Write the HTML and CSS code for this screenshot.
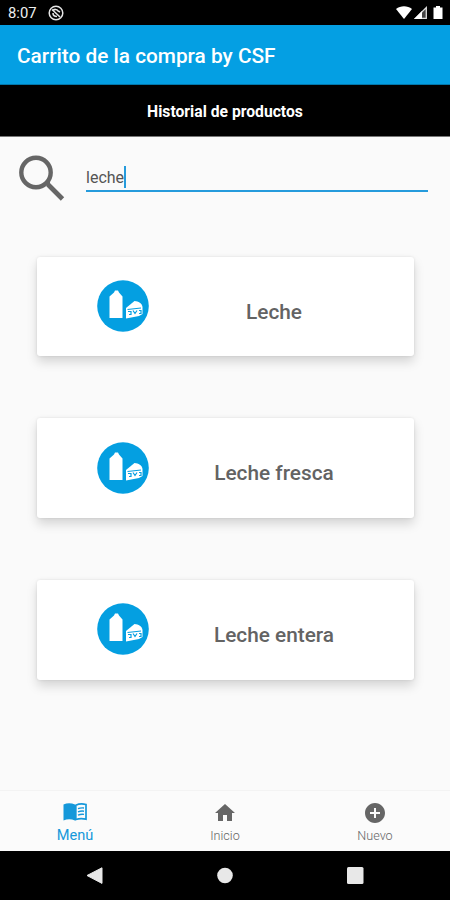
FILE: index.html
```
<!DOCTYPE html>
<html lang="es">
  <head>
    <meta charset="utf-8">
    <title>Carrito de la compra by CSF</title>
    <link rel="stylesheet" href="styles.css">
  </head>
  <body>
    <div class="status">
      <span class="clock">8:07</span>
      <svg class="status-app" width="16" height="16" viewBox="0 0 16 16">
        <circle cx="8" cy="8" r="6.8" fill="none" stroke="#e4e4e4" stroke-width="1.5"/>
        <path d="M4.500 6C6 3.800 9 4 10 6L12 7M4 4.500l8 7.500M5 8c0 2.500 1.500 3.500 4 3.500" fill="none" stroke="#e4e4e4" stroke-width="1.6"/>
      </svg>
      <svg class="status-icons" width="50" height="16" viewBox="0 0 50 16">
        <path d="M0 4C4.500 .3 11.500 .3 16 4L8 14Z" fill="#fff"/>
        <path d="M30.300 2.500v10.800H19.500Z" fill="#444" stroke="#ddd" stroke-width="1.3"/>
        <path d="M26 6v8h-8Z" fill="#fff"/>
        <path d="M40 1h4v1.500h2.500V14h-9V2.500H40Z" fill="#fff"/>
      </svg>
    </div>
    <header class="appbar">Carrito de la compra by CSF</header>
    <h1 class="heading">Historial de productos</h1>

    <main>
      <div class="search">
        <svg width="46" height="46" viewBox="0 0 46 46" fill="none" stroke="#666">
          <circle cx="17" cy="17.5" r="14.7" stroke-width="4.4"/>
          <path d="M27 28h4M29 29.500L43.500 44" stroke-width="4.8"/>
        </svg>
        <div class="field"><span class="query">leche</span></div>
      </div>

      <section class="products">
        <div class="card">
          <svg class="dairy" width="52" height="52" viewBox="0 0 52 52">
            <circle cx="26" cy="26" r="25.8" fill="#049fe1"/>
            <path d="M18 10.500h3l1 2 3.500 4V38h-13V16.500l4.500-4Z" fill="#fff"/>
            <path d="M29 28l8.500-7c4 .2 7.500 2.500 8 6v7L42 36l-13 2.500Z" fill="#fff"/>
            <path d="M30.500 29.500L44 28M31 31.500h3v3h-2M36 30.500l2 3 2-3M42 30.500h2v3h-2" fill="none" stroke="#049fe1" stroke-width="1.2"/>
          </svg>
          <span class="name">Leche</span>
        </div>
        <div class="card">
          <svg class="dairy" width="52" height="52" viewBox="0 0 52 52">
            <circle cx="26" cy="26" r="25.8" fill="#049fe1"/>
            <path d="M18 10.500h3l1 2 3.500 4V38h-13V16.500l4.500-4Z" fill="#fff"/>
            <path d="M29 28l8.500-7c4 .2 7.500 2.500 8 6v7L42 36l-13 2.500Z" fill="#fff"/>
            <path d="M30.500 29.500L44 28M31 31.500h3v3h-2M36 30.500l2 3 2-3M42 30.500h2v3h-2" fill="none" stroke="#049fe1" stroke-width="1.2"/>
          </svg>
          <span class="name">Leche fresca</span>
        </div>
        <div class="card">
          <svg class="dairy" width="52" height="52" viewBox="0 0 52 52">
            <circle cx="26" cy="26" r="25.8" fill="#049fe1"/>
            <path d="M18 10.500h3l1 2 3.500 4V38h-13V16.500l4.500-4Z" fill="#fff"/>
            <path d="M29 28l8.500-7c4 .2 7.500 2.500 8 6v7L42 36l-13 2.500Z" fill="#fff"/>
            <path d="M30.500 29.500L44 28M31 31.500h3v3h-2M36 30.500l2 3 2-3M42 30.500h2v3h-2" fill="none" stroke="#049fe1" stroke-width="1.2"/>
          </svg>
          <span class="name">Leche entera</span>
        </div>
      </section>
    </main>

    <nav class="tabs">
      <div class="tab active">
        <svg width="26" height="26" viewBox="0 0 26 26" fill="none" stroke="currentColor">
          <path d="M1.500 5.500Q7 3 13 5.500V21.500Q7 19 1.500 21.500Z" fill="currentColor" stroke="none"/>
          <path d="M13.800 6.200Q18.500 4 24 5.500V20.200Q18.500 19 13.800 20.500Z" stroke-width="1.7"/>
          <path d="M16 9.700q3-1.200 6-.7M16 12.900q3-1.200 6-.7M16 16.100q3-1.200 6-.7" stroke-width="1.4"/>
        </svg>
        <span>Menú</span>
      </div>
      <div class="tab">
        <svg width="24" height="24" viewBox="0 0 24 24" fill="currentColor"><path d="M10 20v-6h4v6h5v-8h3L12 3 2 12h3v8z"/></svg>
        <span>Inicio</span>
      </div>
      <div class="tab">
        <svg width="24" height="24" viewBox="0 0 24 24" fill="currentColor"><path d="M12 2C6.480 2 2 6.480 2 12s4.480 10 10 10 10-4.480 10-10S17.520 2 12 2zm5 11h-4v4h-2v-4H7v-2h4V7h2v4h4v2z"/></svg>
        <span>Nuevo</span>
      </div>
    </nav>
    <footer class="system">
      <svg width="18" height="18" viewBox="0 0 18 18"><path d="M1 8.500L16 .8v15.600Z" fill="#e8e8e8" stroke="#e8e8e8" stroke-linejoin="round"/></svg>
      <svg width="18" height="18" viewBox="0 0 18 18"><circle cx="9" cy="8.5" r="7.8" fill="#e8e8e8"/></svg>
      <svg width="18" height="18" viewBox="0 0 18 18"><rect x="1" y="0" width="16.5" height="17" rx="1.5" fill="#e8e8e8"/></svg>
    </footer>
  </body>
</html>
```
FILE: styles.css
```
* {
  margin: 0;
  padding: 0;
  box-sizing: border-box;
}
html {
  height: 100%;
}
body {
  display: flex;
  flex-direction: column;
  height: 100%;
  background-color: #fafafa;
  font-family: Roboto, "Liberation Sans", sans-serif;
  overflow: hidden;
}
.status {
  display: flex;
  align-items: center;
  height: 25px;
  padding: 1px 4px 0 8px;
  background-color: #000;
  color: #eee;
  font-size: 14.8px;
}
.status-app {
  margin-left: 11px;
}
.status-icons {
  margin-left: auto;
}
.appbar {
  height: 60px;
  padding-left: 17px;
  background-color: #049fe3;
  border-bottom: 1px solid #0377aa;
  color: #fff;
  font-size: 20.8px;
  font-weight: 500;
  line-height: 62px;
}
.heading {
  height: 52px;
  background-color: #000;
  border-bottom: 1px solid #777;
  color: #fff;
  font-size: 15.7px;
  font-weight: 700;
  line-height: 53px;
  text-align: center;
}
main {
  flex: 1;
}
.search {
  display: flex;
  align-items: flex-start;
  padding: 18px 22px 0 19px;
}
.field {
  display: flex;
  flex: 1;
  height: 37px;
  margin-left: 21px;
  padding-top: 11px;
  border-bottom: 2px solid #259bdc;
}
.query {
  height: 22px;
  border-right: 2px solid #259bdc;
  color: #555;
  font-size: 16px;
  line-height: 24px;
}
.products {
  display: flex;
  flex-direction: column;
  gap: 62px;
  padding: 55.6px 36px 0 37px;
}
.card {
  display: flex;
  height: 99.7px;
  background-color: #fff;
  border-radius: 3px;
  box-shadow: 0 6px 11px rgba(0, 0, 0, 0.15), 0 0 3px rgba(0, 0, 0, 0.1);
}
.dairy {
  margin: 23.5px 0 0 60px;
}
.name {
  width: 250px;
  color: #636363;
  font-size: 20.8px;
  font-weight: 500;
  line-height: 110px;
  text-align: center;
}
.tabs {
  display: flex;
  height: 61px;
  background-color: #fbfbfb;
  border-top: 1px solid #f3f3f3;
}
.tab {
  display: flex;
  flex: 1;
  flex-direction: column;
  align-items: center;
  padding-top: 10px;
  color: #666;
  font-size: 12.6px;
  font-weight: 300;
  line-height: 21px;
}
.active {
  padding-top: 8px;
  color: #1598da;
  font-size: 14.6px;
  font-weight: 400;
}
.system {
  display: flex;
  align-items: center;
  justify-content: space-between;
  height: 49px;
  padding: 0 86px;
  background-color: #000;
}
```
